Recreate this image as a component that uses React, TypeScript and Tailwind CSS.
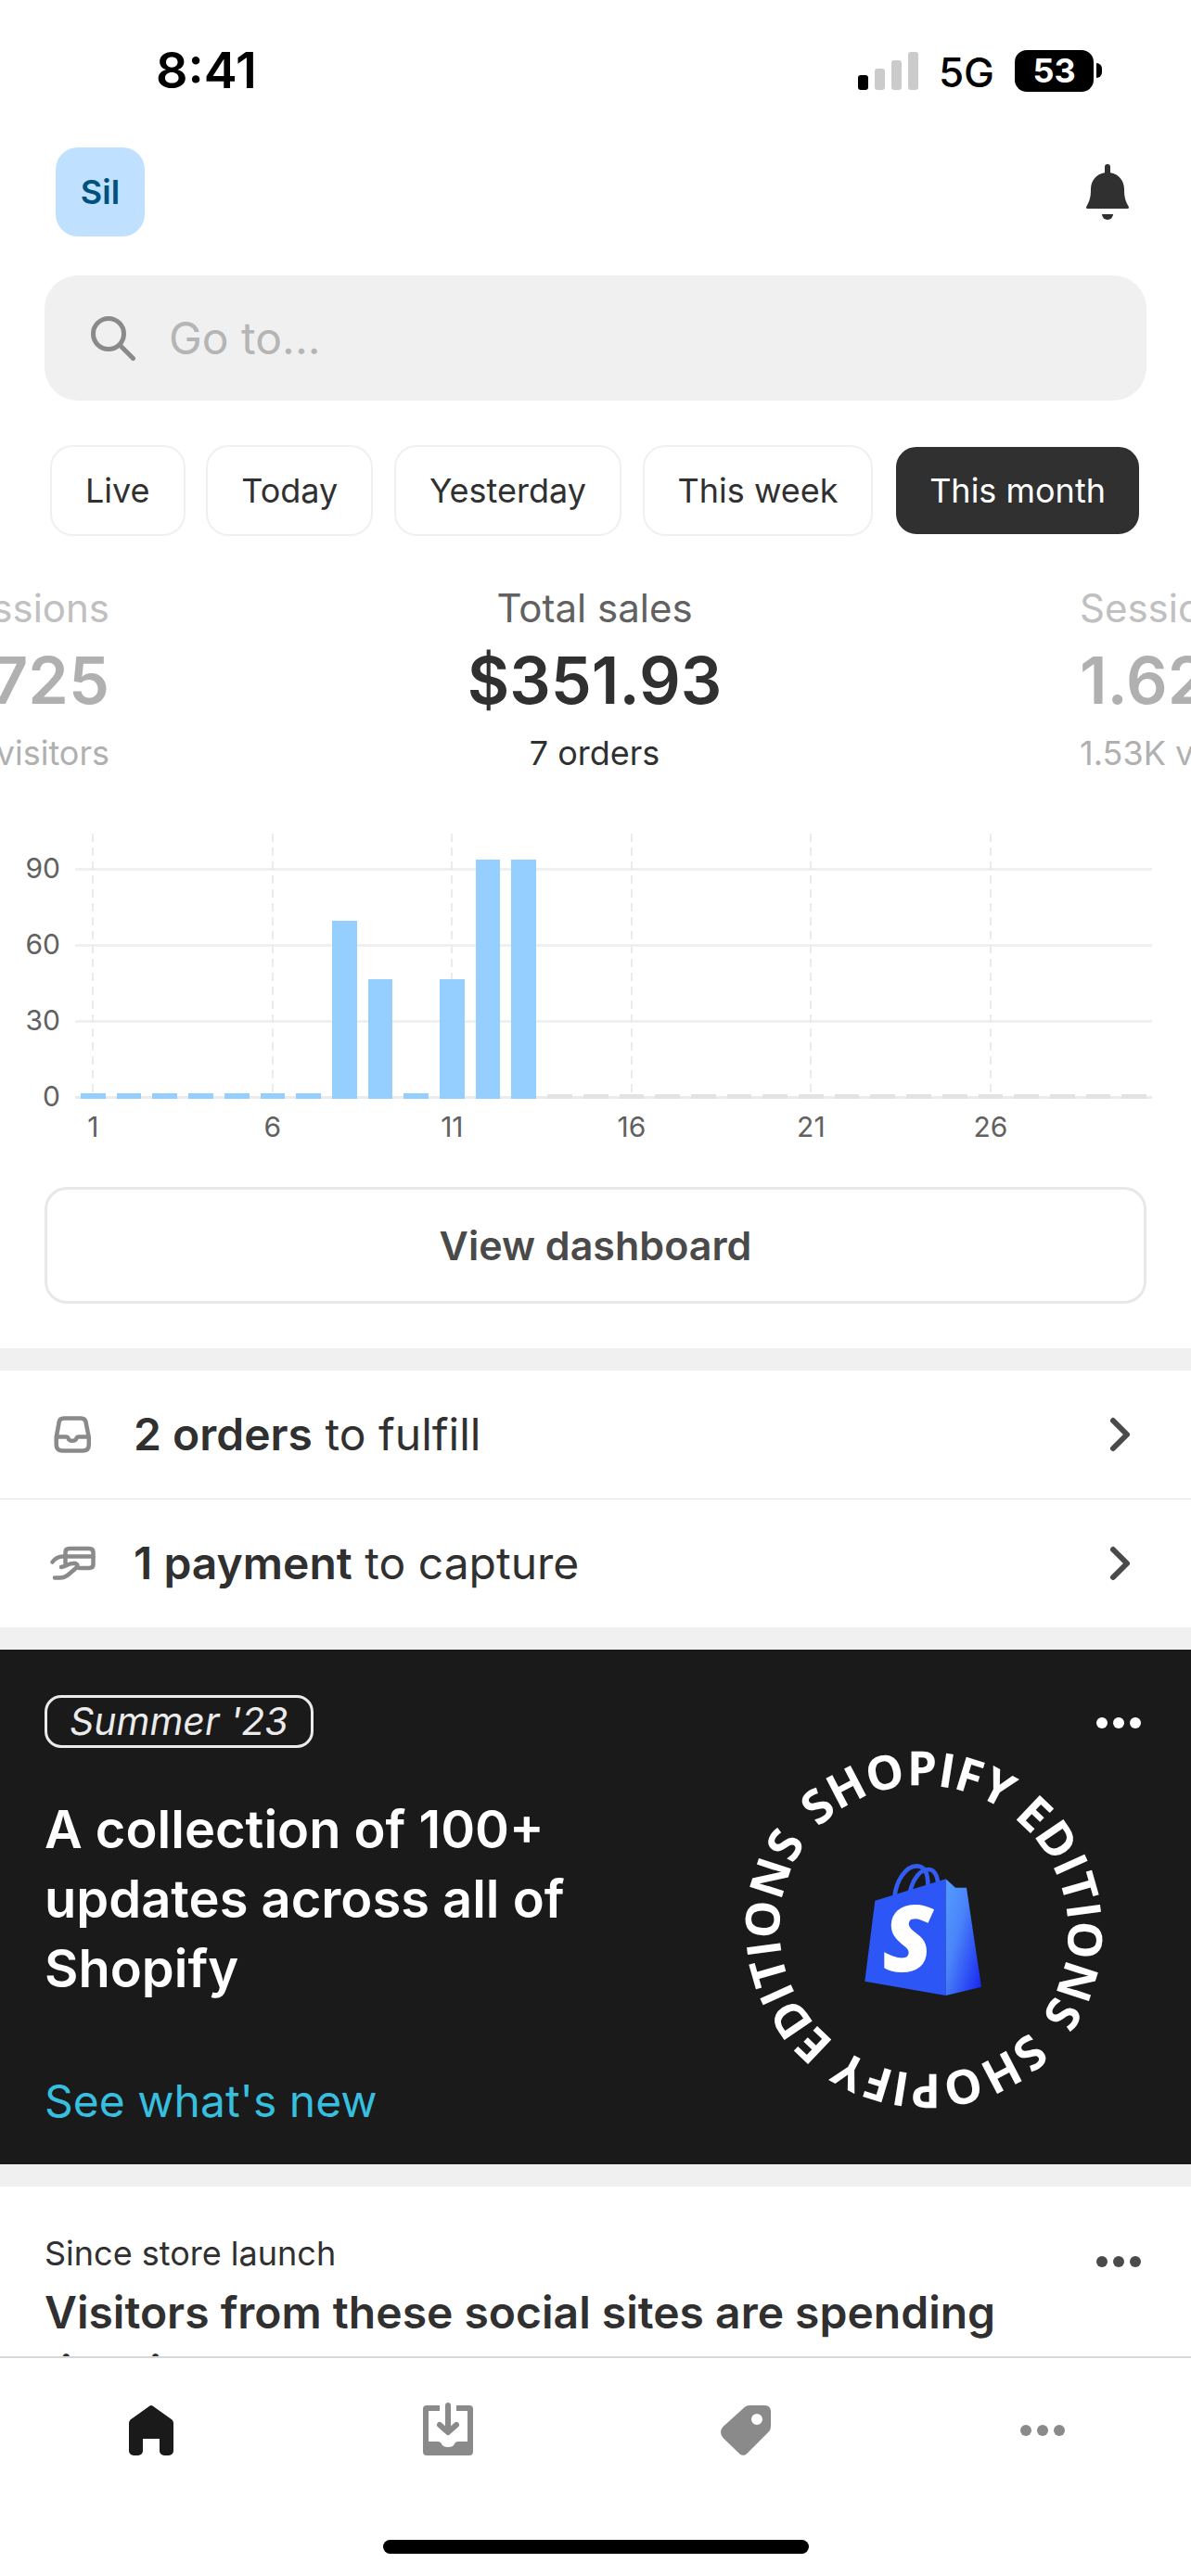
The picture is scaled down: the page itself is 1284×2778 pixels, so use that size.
import React from "react";

const ranges = ["Live", "Today", "Yesterday", "This week", "This month"];

const sales = [0, 0, 0, 0, 0, 0, 0, 70, 47, 0, 47, 94, 94];
const days = Array.from({ length: 30 }, (_, i) => i + 1);
const TOP_VALUE = 104;

function Dots({ className }: { className: string }) {
  return (
    <svg viewBox="0 0 48 12" className={`h-3 w-12 ${className}`} fill="currentColor" aria-hidden="true">
      <circle cx="6" cy="6" r="6" />
      <circle cx="24" cy="6" r="6" />
      <circle cx="42" cy="6" r="6" />
    </svg>
  );
}

function StatusBar() {
  return (
    <div className="flex h-[152px] items-center justify-between pr-24 pl-[168px] text-black">
      <span className="text-[54px] leading-none font-semibold">8:41</span>
      <div className="flex items-center">
        <svg viewBox="0 0 65 41" className="h-[41px] w-[65px]" aria-label="Signal">
          <rect x="0" y="25" width="11" height="16" rx="3" fill="#000" />
          <rect x="18" y="18" width="11" height="23" rx="3" fill="#cbcbcb" />
          <rect x="36" y="9" width="11" height="32" rx="3" fill="#cbcbcb" />
          <rect x="54" y="0" width="11" height="41" rx="3" fill="#cbcbcb" />
        </svg>
        <span className="ml-[22px] pt-1 text-[44px] leading-none font-medium">5G</span>
        <span className="ml-[22px] flex h-[45px] w-[85px] items-center justify-center rounded-[13px] bg-black text-[36px] leading-none font-bold text-white">
          53
        </span>
        <span className="ml-[3px] h-4 w-[6px] rounded-r-full bg-black" />
      </div>
    </div>
  );
}

function Header() {
  return (
    <header className="flex items-center justify-between px-[60px] pt-[7px]">
      <button className="size-24 rounded-[24px] bg-[#bfe0ff] text-[36px] font-semibold text-[#00527c]">Sil</button>
      <button aria-label="Notifications" className="text-[#303030]">
        <svg viewBox="0 0 60 60" className="size-[60px]" fill="currentColor">
          <path d="M30 0a3 3 0 0 1 3 3v6.300C42 10.500 48 18 48 27c0 9 1.500 13 4.800 19 .600 1.200.100 2-1.300 2h-43c-1.400 0-1.900-.800-1.300-2C10.500 40 12 36 12 27c0-9 6-16.500 15-17.700V3a3 3 0 0 1 3-3z" />
          <path d="M24 54h12a6 6 0 0 1-12 0z" />
        </svg>
      </button>
    </header>
  );
}

function Search() {
  return (
    <label className="mx-12 mt-[42px] flex h-[135px] items-center rounded-[36px] bg-[#f0f0f0] pl-[50px]">
      <svg viewBox="0 0 48 48" className="size-12 shrink-0 text-[#8a8a8a]" fill="none" stroke="currentColor" strokeWidth="5" aria-hidden="true">
        <circle cx="19" cy="19" r="16.500" />
        <path d="M31 31 45.500 45.500" strokeLinecap="round" />
      </svg>
      <input
        type="text"
        aria-label="Go to"
        placeholder="Go to..."
        className="ml-9 min-w-0 flex-1 bg-transparent text-[48px] text-[#303030] outline-none placeholder:text-[#b5b5b5]"
      />
    </label>
  );
}

function RangeTabs() {
  return (
    <div className="mt-12 flex justify-between px-[54px]">
      {ranges.map((r) => (
        <button
          key={r}
          className={
            r === "This month"
              ? "h-[98px] rounded-[24px] border-2 border-white bg-[#303030] px-[36px] text-[36px] whitespace-nowrap text-white"
              : "h-[98px] rounded-[24px] border-2 border-[#f0f0f0] bg-white px-[36px] text-[36px] whitespace-nowrap text-[#303030]"
          }
        >
          {r}
        </button>
      ))}
    </div>
  );
}

function Stats() {
  return (
    <div className="mt-[42px] flex whitespace-nowrap">
      <div className="flex w-[118px] flex-col items-end overflow-hidden text-[#b0b0b0]">
        <span className="text-[42px] leading-[72px] text-[#c0c0c0]">Sessions</span>
        <span className="text-[70px] leading-[84px] font-semibold">725</span>
        <span className="text-[36px] leading-[72px]">visitors</span>
      </div>
      <div className="flex flex-1 flex-col items-center text-[#303030]">
        <span className="text-[42px] leading-[72px] text-[#616161]">Total sales</span>
        <span className="text-[70px] leading-[84px] font-semibold">$351.93</span>
        <span className="text-[36px] leading-[72px]">7 orders</span>
      </div>
      <div className="flex w-[120px] flex-col items-start overflow-hidden text-[#b0b0b0]">
        <span className="text-[42px] leading-[72px] text-[#c0c0c0]">Sessions</span>
        <span className="text-[70px] leading-[84px] font-semibold">1.62K</span>
        <span className="text-[36px] leading-[72px]">1.53K visitors</span>
      </div>
    </div>
  );
}

function Chart() {
  return (
    <div className="mt-[51px] flex pr-[42px]">
      <div className="flex w-[81px] flex-col pr-4 text-right text-[30px] leading-[82px] text-[#616161]">
        <span className="-mt-1">90</span>
        <span>60</span>
        <span>30</span>
        <span>0</span>
      </div>
      <div className="flex-1">
        <div className="relative h-[286px]">
          <div className="absolute inset-x-0 bottom-0 flex flex-col">
            {[90, 60, 30].map((v) => (
              <div key={v} className="h-[82px] border-t-3 border-[#f0f0f0]" />
            ))}
            <div className="h-[3px] bg-[#ebebeb]" />
          </div>
          <div className="absolute inset-0 grid grid-cols-[repeat(30,minmax(0,1fr))]">
            {days.map((d) => (
              <div key={d} className="relative flex flex-col items-center justify-end px-[6px]">
                {d % 5 === 1 && (
                  <svg className="absolute inset-y-0 h-full w-[2px]" aria-hidden="true">
                    <line x1="1" x2="1" y1="0" y2="100%" stroke="#ebebeb" strokeWidth="2" strokeDasharray="9 6" />
                  </svg>
                )}
                {d > sales.length ? (
                  <div className="relative h-[5px] w-full bg-[#e3e3e3]" />
                ) : (
                  <div
                    className="relative min-h-[6px] w-full bg-[#94cfff]"
                    style={{ height: `${((sales[d - 1] || 0) / TOP_VALUE) * 100}%` }}
                  />
                )}
              </div>
            ))}
          </div>
        </div>
        <div className="grid grid-cols-[repeat(30,minmax(0,1fr))] pt-1.5 text-[30px] leading-[48px] text-[#616161]">
          {days.map((d) => (
            <span key={d} className="flex justify-center">
              {d % 5 === 1 ? d : ""}
            </span>
          ))}
        </div>
      </div>
    </div>
  );
}

function Task({ bold, rest, icon }: { bold: string; rest: string; icon: React.ReactNode }) {
  return (
    <a href="#" className="flex h-[138px] items-center pr-[62px] pl-12 text-[#303030]">
      <svg
        viewBox="0 0 60 60"
        className="size-[60px] shrink-0 text-[#8a8a8a]"
        fill="none"
        stroke="currentColor"
        strokeWidth="4.500"
        strokeLinecap="round"
        strokeLinejoin="round"
        aria-hidden="true"
      >
        {icon}
      </svg>
      <span className="ml-9 flex-1 text-[48px] leading-[60px]">
        <span className="font-semibold">{bold}</span> {rest}
      </span>
      <svg viewBox="0 0 28 40" className="h-10 w-7 text-[#4a4a4a]" fill="none" stroke="currentColor" strokeWidth="6" strokeLinecap="round" strokeLinejoin="round" aria-hidden="true">
        <path d="M6 5 21 20 6 35" />
      </svg>
    </a>
  );
}

function Ring() {
  return (
    <svg viewBox="0 0 400 400" className="size-[400px]" role="img" aria-label="Shopify Editions">
      <defs>
        <path id="ring" d="M88.300 88.300A158 158 0 0 1 311.700 311.700A158 158 0 0 1 88.300 88.300" />
        <linearGradient id="bag-side" x1="0" y1="0.200" x2="0.900" y2="1">
          <stop offset="0" stopColor="#5297ff" />
          <stop offset="0.350" stopColor="#4a84fa" />
          <stop offset="1" stopColor="#1a2af0" />
        </linearGradient>
      </defs>
      <g fill="#fff" className="font-['Open_Sans'] text-[51px] font-bold">
        <text transform="rotate(-1 200 200)">
          <textPath href="#ring">SHOPIFY EDITIONS</textPath>
        </text>
        <text transform="rotate(179 200 200)">
          <textPath href="#ring">SHOPIFY EDITIONS</textPath>
        </text>
      </g>
      <g transform="translate(84 98) scale(0.333333)">
        <g fill="none" stroke="#335cf2" strokeWidth="14">
          <path d="M253 200C258 150 288 100 325 100C350 100 362 122 361 165" />
          <path d="M303 185C312 140 338 111 362 111C380 111 391 128 394 158" />
        </g>
        <path fill="#2c56f5" d="M190 212 419 142V519L157 473z" />
        <path fill="url(#bag-side)" d="M419 142 450 170H486L534 491 419 519z" />
        <text x="214" y="441" fill="#fff" fontSize="300" fontWeight="800" fontStyle="italic" fontFamily="Open Sans">
          S
        </text>
      </g>
    </svg>
  );
}

function Promo() {
  return (
    <section className="flex h-[555px] bg-[#1a1a1a] pt-[49px] pl-12 text-white">
      <div className="flex flex-1 flex-col items-start">
        <span className="flex h-[57px] items-center rounded-[18px] border-3 border-[#ebebeb] px-6 text-[41px] text-[#ebebeb] italic">
          Summer '23
        </span>
        <h2 className="mt-[51px] w-[620px] text-[56px] leading-[75px] font-semibold">
          A collection of 100+ updates across all of Shopify
        </h2>
        <a href="#" className="mt-[75px] text-[48px] leading-[60px] text-[#36bfdf]">
          See what's new
        </a>
      </div>
      <div className="relative mr-[88px] flex items-center">
        <Ring />
        <button aria-label="More" className="absolute top-6 -right-[34px]">
          <Dots className="text-white" />
        </button>
      </div>
    </section>
  );
}

function TabBar() {
  return (
    <nav className="h-[237px] shrink-0 border-t-2 border-[#d8d8d8] bg-white">
      <div className="grid grid-cols-4 justify-items-center pt-12 pl-[3px] text-[#8a8a8a]">
        <a href="#" aria-label="Home" className="text-[#1a1a1a]">
          <svg viewBox="0 0 60 60" className="size-[60px]" fill="currentColor">
            <path d="M28.500 3.600a2.200 2.200 0 0 1 3 0L52.500 18.500Q54 20 54 22V52a5 5 0 0 1-5 5h-5a5 5 0 0 1-5-5V39H21V52a5 5 0 0 1-5 5h-5a5 5 0 0 1-5-5V22Q6 20 7.500 18.500z" />
          </svg>
        </a>
        <a href="#" aria-label="Orders">
          <svg viewBox="0 0 60 60" className="size-[60px]" fill="currentColor">
            <path d="M7 3H21V9H9V42H19Q21.500 42 22.500 43.500Q24 48 30 48Q36 48 37.500 43.500Q38.500 42 41 42H51V9H39V3H53a4 4 0 0 1 4 4V53a4 4 0 0 1-4 4H7a4 4 0 0 1-4-4V7a4 4 0 0 1 4-4z" />
            <path d="M30 3V30M21 24 30 32 39 24" fill="none" stroke="currentColor" strokeWidth="6" strokeLinecap="round" strokeLinejoin="round" />
          </svg>
        </a>
        <a href="#" aria-label="Products">
          <svg viewBox="0 0 60 60" className="size-[60px]" fill="currentColor">
            <path
              fillRule="evenodd"
              d="M34 3H51a6 6 0 0 1 6 6V26a8 8 0 0 1-2.300 5.600L31 55.300a5.500 5.500 0 0 1-7.600 0L5.500 38a8.500 8.500 0 0 1 0-12L28.400 5.300A8 8 0 0 1 34 3zM42 12a6 6 0 1 0 0 12a6 6 0 0 0 0-12z"
            />
          </svg>
        </a>
        <a href="#" aria-label="More" className="flex items-center">
          <Dots className="" />
        </a>
      </div>
      <div className="mx-auto mt-[88px] h-[15px] w-[459px] rounded-full bg-black" />
    </nav>
  );
}

export default function App() {
  return (
    <div className="flex h-screen flex-col bg-white font-[Inter,sans-serif]">
      <main className="min-h-0 flex-1 overflow-hidden">
        <StatusBar />
        <Header />
        <Search />
        <RangeTabs />
        <Stats />
        <Chart />
        <div className="px-12 pt-[41px] pb-12">
          <button className="h-[126px] w-full rounded-[24px] border-3 border-[#e8e8e8] text-[43px] font-semibold text-[#4a4a4a]">
            View dashboard
          </button>
        </div>
        <div className="border-y-24 border-[#f0f0f0]">
          <Task
            bold="2 orders"
            rest="to fulfill"
            icon={
              <>
                <path d="M21 12.500H39Q44 12.500 44.600 17L47.800 33V41Q47.800 47.500 41 47.500H19.500Q12.700 47.500 12.700 41V33L15.600 17Q16.200 12.500 21 12.500z" />
                <path d="M13 32.500H23Q25 32.500 25.500 34Q26.300 36.800 30 36.800Q33.700 36.800 34.500 34Q35 32.500 37 32.500H47" />
              </>
            }
          />
          <div className="border-t border-[#e3e3e3]">
            <Task
              bold="1 payment"
              rest="to capture"
              icon={
                <>
                  <path d="M22.500 30V18Q22.500 14 27 14H48Q52.500 14 52.500 18V31Q52.500 35 48 35H37" />
                  <path d="M8.500 28.500Q13 22.500 20 22.500H52.500" />
                  <path d="M18 34Q21 33.500 25 31.500Q29 29.500 33 30Q37.500 31.500 34 35L27 41Q22 45.500 17 45.500H11" />
                </>
              }
            />
          </div>
        </div>
        <Promo />
        <section className="flex justify-between border-t-24 border-[#f0f0f0] pr-[54px] pl-12 text-[#303030]">
          <div className="pt-12">
            <p className="text-[36px] leading-[48px]">Since store launch</p>
            <h2 className="mt-2 w-[1060px] text-[48px] leading-[64px] font-semibold">
              Visitors from these social sites are spending time in your store
            </h2>
          </div>
          <button aria-label="More options" className="mt-[75px] self-start">
            <Dots className="text-[#4a4a4a]" />
          </button>
        </section>
      </main>
      <TabBar />
    </div>
  );
}
